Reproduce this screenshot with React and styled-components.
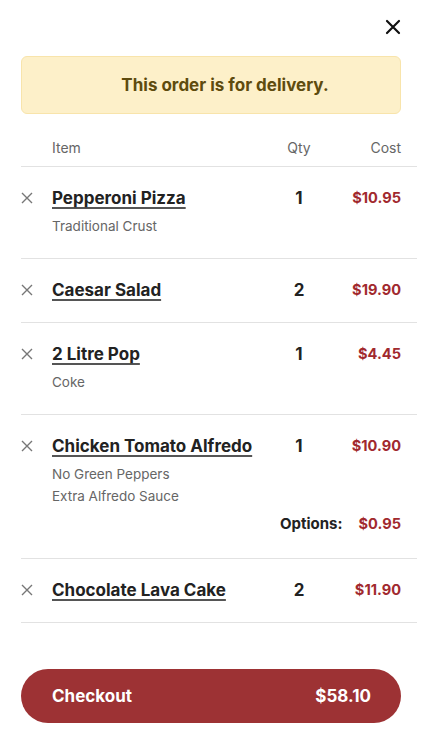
import React from 'react';
import styled, { createGlobalStyle } from 'styled-components';

const GlobalStyle = createGlobalStyle`
  body {
    margin: 0;
    background: #fff;
    font-family: Inter, "Noto Sans", sans-serif;
    color: #222;
  }
`;

const Page = styled.div`
  width: 422px;
  min-height: 750px;
  box-sizing: border-box;
  padding: 19px 5px 0 21px;
  display: flex;
  flex-direction: column;
`;

const TopBar = styled.div`
  display: flex;
  justify-content: flex-end;
  padding-right: 16px;
`;

const CloseButton = styled.button`
  width: 16px;
  height: 16px;
  padding: 0;
  border: 0;
  background: none;
  display: flex;
  cursor: pointer;
`;

const Banner = styled.div`
  margin: 21px 16px 0 0;
  height: 58px;
  box-sizing: border-box;
  padding-left: 28px;
  background: #fdf0c9;
  border: 1px solid #f8e4ab;
  border-radius: 6px;
  display: flex;
  align-items: center;
  justify-content: center;
  font-size: 17px;
  font-weight: 700;
  color: #5e4b0e;
`;

const Grid = styled.div`
  display: grid;
  grid-template-columns: 31px 1fr 40px 82px;
  padding-right: 16px;
  border-bottom: 1px solid #e2e2e2;
`;

const Header = styled(Grid)`
  margin-top: 24px;
  padding-bottom: 8px;
  font-size: 14px;
  line-height: 20px;
  color: #666;
`;

const Row = styled(Grid)`
  padding-top: 20px;
  padding-bottom: ${p => (p.$options ? 23 : 21)}px;
`;

const Cell = styled.div`
  grid-column: ${p => p.$col};
  text-align: ${p => p.$align || 'left'};
`;

const RemoveButton = styled.button`
  grid-column: 1;
  width: 13px;
  height: 22px;
  padding: 0;
  border: 0;
  background: none;
  display: flex;
  align-items: center;
  cursor: pointer;
`;

const Name = styled.a`
  grid-column: 2;
  font-size: 17px;
  line-height: 22px;
  font-weight: 700;
  color: #222;
  text-decoration: underline;
  text-decoration-thickness: 1.5px;
  text-underline-offset: 3px;
  text-decoration-color: #555;
`;

const Qty = styled.div`
  grid-column: 3;
  text-align: center;
  font-size: 17px;
  line-height: 22px;
  font-weight: 700;
`;

const Price = styled.div`
  grid-column: 4;
  text-align: right;
  font-size: 14.6px;
  line-height: 22px;
  font-weight: 700;
  color: #a1292e;
`;

const Subs = styled.div`
  grid-column: 2 / 5;
  margin-top: 6px;
  font-size: 13.5px;
  line-height: 22px;
  color: #666;
`;

const OptionsLine = styled.div`
  grid-column: 2 / 5;
  margin-top: 6px;
  display: flex;
  justify-content: flex-end;
  align-items: baseline;
  gap: 16px;
  font-size: 15px;
  line-height: 22px;
  font-weight: 700;
`;

const OptionsPrice = styled.span`
  font-size: 14.6px;
  color: #a1292e;
`;

const Checkout = styled.button`
  margin: 46px 16px 0 0;
  height: 54px;
  border: 0;
  border-radius: 27px;
  background: #9d3234;
  color: #fff;
  font-family: inherit;
  font-size: 17px;
  font-weight: 700;
  display: flex;
  align-items: center;
  justify-content: space-between;
  padding: 0 30px 0 31px;
  cursor: pointer;
`;

const CloseIcon = ({ size, color, width }) => (
  <svg width={size} height={size} viewBox="0 0 16 16" fill="none">
    <path d="M2 2L14 14M14 2L2 14" stroke={color} strokeWidth={width} strokeLinecap="round" />
  </svg>
);

const items = [
  { name: 'Pepperoni Pizza', qty: 1, cost: '$10.95', subs: ['Traditional Crust'] },
  { name: 'Caesar Salad', qty: 2, cost: '$19.90', subs: [] },
  { name: '2 Litre Pop', qty: 1, cost: '$4.45', subs: ['Coke'] },
  {
    name: 'Chicken Tomato Alfredo',
    qty: 1,
    cost: '$10.90',
    subs: ['No Green Peppers', 'Extra Alfredo Sauce'],
    options: '$0.95'
  },
  { name: 'Chocolate Lava Cake', qty: 2, cost: '$11.90', subs: [] }
];

export default function App() {
  return (
    <Page>
      <GlobalStyle />
      <TopBar>
        <CloseButton aria-label="Close">
          <CloseIcon size={16} color="#111" width={2.2} />
        </CloseButton>
      </TopBar>
      <Banner>This order is for delivery.</Banner>
      <Header>
        <Cell $col={2}>Item</Cell>
        <Cell $col={3} $align="center">Qty</Cell>
        <Cell $col={4} $align="right">Cost</Cell>
      </Header>
      {items.map(item => (
        <Row key={item.name} $options={!!item.options}>
          <RemoveButton aria-label="Remove">
            <svg width="12" height="12" viewBox="0 0 12 12" fill="none">
              <path d="M1 1L11 11M11 1L1 11" stroke="#777" strokeWidth="1.4" />
            </svg>
          </RemoveButton>
          <Cell $col={2}>
            <Name href="#">{item.name}</Name>
          </Cell>
          <Qty>{item.qty}</Qty>
          <Price>{item.cost}</Price>
          {item.subs.length > 0 && (
            <Subs>
              {item.subs.map(s => (
                <div key={s}>{s}</div>
              ))}
            </Subs>
          )}
          {item.options && (
            <OptionsLine>
              Options:<OptionsPrice>{item.options}</OptionsPrice>
            </OptionsLine>
          )}
        </Row>
      ))}
      <Checkout>
        <span>Checkout</span>
        <span>$58.10</span>
      </Checkout>
    </Page>
  );
}
